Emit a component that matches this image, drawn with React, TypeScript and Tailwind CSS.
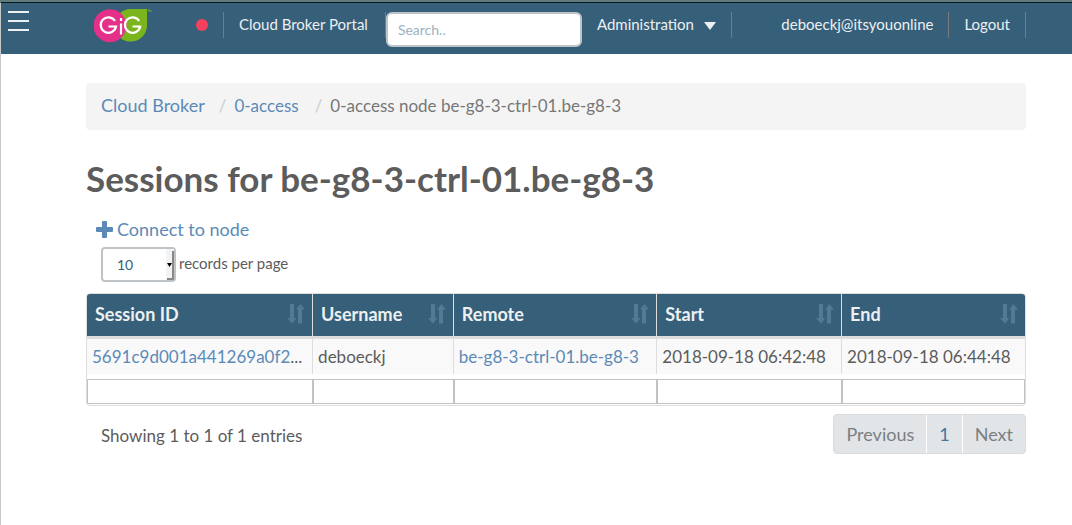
import React from "react";

const columns = ["Session ID", "Username", "Remote", "Start", "End"];
const widths = ["w-[24%]", "w-[15%]", "w-[21.7%]", "w-[19.7%]", "w-[19.6%]"];

const sessions = [
  {
    id: "5691c9d001a441269a0f2",
    username: "deboeckj",
    remote: "be-g8-3-ctrl-01.be-g8-3",
    start: "2018-09-18 06:42:48",
    end: "2018-09-18 06:44:48",
  },
];

function Logo() {
  return (
    <svg viewBox="0 0 58 34" className="h-[34px] w-[58px]" role="img" aria-label="GIG">
      <path d="M37 0H53V17A16.3 16.3 0 1 1 37 0Z" fill="#7ab51d" />
      <circle cx="16" cy="16.7" r="16.5" fill="#e5308a" />
      <g fill="none" stroke="#fff" strokeWidth="2.2">
        <path d="M21 12A7.7 7.7 0 1 0 22 17.5H14.5" />
        <path d="M45.2 12A7.7 7.7 0 1 0 46.2 17.5H38.5" />
        <path d="M27 14.5V25.5M27 9V12" />
      </g>
      <path d="M54 1H56M55 1V3M57 1V3" stroke="#7ab51d" strokeWidth=".8" />
    </svg>
  );
}

function SortIcon() {
  return (
    <svg viewBox="0 0 18 20" className="h-5 w-[18px] shrink-0" fill="#527a92" aria-hidden="true">
      <path d="M3 0H7V14H9.5L5 19.5L0 14H3Z" />
      <path d="M11 19.5H15V5.5H18L13.5 0L9 5.5H11Z" />
    </svg>
  );
}

function Header() {
  return (
    <header className="flex h-[52px] items-start border-l border-t border-l-[#c8c8c8] border-t-[#08191c] bg-[#365f7a] text-[15px] leading-6 text-[#ecf0f1]">
      <button aria-label="Menu" className="ml-[7px] mt-2 flex w-[21px] flex-col gap-[7px]">
        <span className="h-0.5 w-full bg-[#ecf0f1]" />
        <span className="h-0.5 w-full bg-[#ecf0f1]" />
        <span className="h-0.5 w-full bg-[#ecf0f1]" />
      </button>
      <a href="#home" className="ml-[65px] mt-1.5">
        <Logo />
      </a>
      <span className="ml-11 mt-4 size-3 rounded-full bg-[#f5405e]" />
      <nav className="ml-[15px] mt-[9px] flex grow items-start">
        <a href="#portal" className="h-[26px] whitespace-nowrap border-x border-[#777b80] pl-[15px] pr-[17px]">
          Cloud Broker Portal
        </a>
        <input
          aria-label="Search"
          placeholder="Search.."
          className="h-[35px] w-[196px] rounded-md border-2 border-[#bdc3c7] bg-white px-2.5 text-sm text-[#34495e] placeholder:text-[#9ab2c1]"
        />
        <button className="flex h-[26px] items-center gap-2.5 border-r border-[#777b80] px-[15px] pb-0.5">
          Administration
          <svg viewBox="0 0 12 8" className="mt-1 h-2 w-3" fill="#ecf0f1" aria-hidden="true">
            <path d="M0 0H12L6 8Z" />
          </svg>
        </button>
      </nav>
      <div className="mr-[46px] mt-[9px] flex">
        <a href="#user" className="h-[26px] border-r border-[#777b80] px-[15px]">
          deboeckj@itsyouonline
        </a>
        <a href="#logout" className="h-[26px] border-r border-[#777b80] px-[15px]">
          Logout
        </a>
      </div>
    </header>
  );
}

function SessionTable() {
  return (
    <div className="mt-[11px] overflow-hidden rounded-[4px] border border-[#dddddd]">
      <table className="w-full table-fixed border-separate border-spacing-0 text-left">
        <thead>
          <tr className="bg-[#365f7a] text-[#ecf0f1]">
            {columns.map((name, i) => (
              <th
                key={name}
                className={`${widths[i]} border-b-[3px] border-l border-[#dddddd] p-0 font-bold first:border-l-0`}
              >
                <button className="flex h-[42px] w-full items-center justify-between pb-0.5 pl-2 pr-[7px]">
                  {name}
                  <SortIcon />
                </button>
              </th>
            ))}
          </tr>
        </thead>
        <tbody>
          {sessions.map((s) => (
            <tr
              key={s.id}
              className="h-[35px] bg-[#f9f9f9] text-[17px] *:whitespace-nowrap *:border-l *:border-[#dddddd] *:px-[5px] *:py-0 *:first:border-l-0"
            >
              <td>
                <a href="#session" className="text-[#5b8ab8]">{s.id}</a>...
              </td>
              <td>{s.username}</td>
              <td>
                <a href="#remote" className="text-[#5b8ab8]">{s.remote}</a>
              </td>
              <td>{s.start}</td>
              <td>{s.end}</td>
            </tr>
          ))}
        </tbody>
        <tfoot>
          <tr>
            {columns.map((name) => (
              <td key={name} className="group p-0 pb-px pt-[5px]">
                <div className="border-l border-[#bdc3c7] group-first:border-l-0">
                  <input
                    aria-label={`Filter ${name}`}
                    className="block h-[25px] w-full border-y border-l border-[#bdc3c7] bg-white px-1 group-last:border-r"
                  />
                </div>
              </td>
            ))}
          </tr>
        </tfoot>
      </table>
    </div>
  );
}

export default function App() {
  return (
    <div className="min-h-screen bg-white font-['Lato',sans-serif] text-lg leading-[26px] text-[#5c5c5c]">
      <div className="h-0.5 bg-[#5f7a7c]" />
      <Header />
      <main className="min-h-[471px] border-l border-[#c8c8c8] pl-[85px] pr-[46px] pt-[29px]">
        <nav aria-label="Breadcrumb" className="flex h-[47px] items-baseline rounded-[4px] bg-[#f4f4f4] px-[15px] pt-[9px] text-[17px]">
          <a href="#broker" className="text-lg leading-[26px] text-[#5b8ab8]">Cloud Broker</a>
          <span className="pl-3.5 pr-2 text-[#cccccc]">/</span>
          <a href="#access" className="text-[#5b8ab8]">0-access</a>
          <span className="pl-4 pr-2 text-[#cccccc]">/</span>
          <span className="text-[#777777]">0-access node be-g8-3-ctrl-01.be-g8-3</span>
        </nav>
        <h1 className="mt-7 text-[35px] font-bold leading-10">Sessions for be-g8-3-ctrl-01.be-g8-3</h1>
        <a href="#connect" className="ml-2.5 mt-[18px] flex w-fit items-center gap-1 text-[#5b8ab8]">
          <svg viewBox="0 0 17 17" className="size-[17px]" fill="currentColor" aria-hidden="true">
            <rect x="6" y="0" width="5" height="17" rx="1" />
            <rect x="0" y="6" width="17" height="5" rx="1" />
          </svg>
          Connect to node
        </a>
        <label className="ml-[15px] mt-[5px] flex w-fit items-center gap-[3px] text-[15px]">
          <span className="relative">
            <select className="h-[35px] w-[75px] appearance-none rounded-[4px] border-2 border-[#bdc3c7] bg-white pl-3.5 text-sm text-[#365f7a]">
              <option>10</option>
              <option>25</option>
              <option>50</option>
              <option>100</option>
            </select>
            <svg viewBox="0 0 8 31" className="pointer-events-none absolute right-0.5 top-0.5 h-[31px] w-2" aria-hidden="true">
              <path d="M0 0H8V31H0Z" fill="#f3f3f3" />
              <path d="M1 30H7V2" fill="none" stroke="#888" strokeWidth="2" />
              <path d="M1 14H6L3.5 18Z" fill="#000" />
            </svg>
          </span>
          <span className="pb-1">records per page</span>
        </label>
        <SessionTable />
        <div className="mt-2 flex items-start justify-between">
          <p className="ml-[15px] mt-[9px] text-[17px]">Showing 1 to 1 of 1 entries</p>
          <div className="flex h-10 rounded-[4px] border border-[#d9dcde] bg-[#e1e5e8] text-[#7b7f82]">
            <button className="px-3">Previous</button>
            <button className="border-x border-white px-3 text-[#46749b]">1</button>
            <button className="px-3">Next</button>
          </div>
        </div>
      </main>
    </div>
  );
}
